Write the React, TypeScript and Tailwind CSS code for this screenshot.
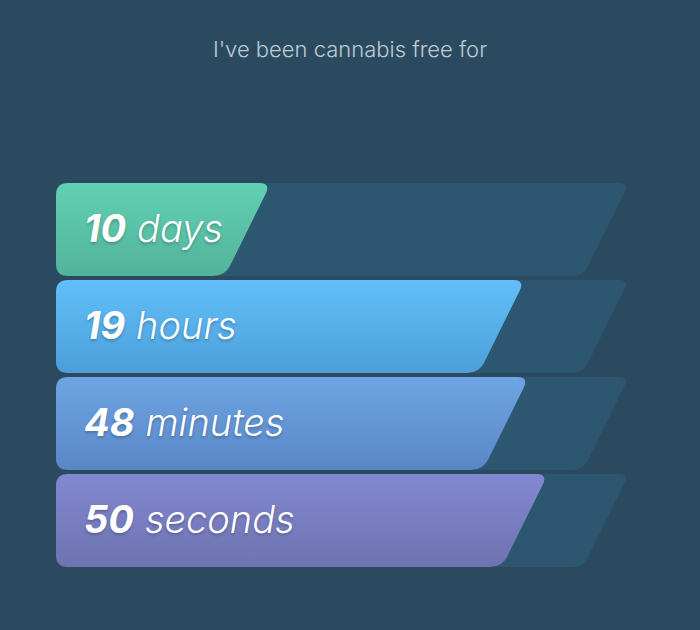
const rows = [
  { num: "10", unit: "days", fill: 215, from: "#62d0b3", to: "#52b39b" },
  { num: "19", unit: "hours", fill: 469, from: "#62bff9", to: "#4c9fd9" },
  { num: "48", unit: "minutes", fill: 473, from: "#6ea4e3", to: "#5987c6" },
  { num: "50", unit: "seconds", fill: 492, from: "#8288d0", to: "#6f73b1" },
];

const W = 573;
const H = 93;
const SLANT = 46;

// rounded polygon: left edge straight, right edge slanted
const shape = (w: number, r: number) => {
  const pts = [
    [0, 0],
    [w, 0],
    [w - SLANT, H],
    [0, H],
  ];
  let d = "";
  for (let i = 0; i < pts.length; i++) {
    const p = pts[i];
    const prev = pts[(i + pts.length - 1) % pts.length];
    const next = pts[(i + 1) % pts.length];
    const v1 = [prev[0] - p[0], prev[1] - p[1]];
    const v2 = [next[0] - p[0], next[1] - p[1]];
    const l1 = Math.hypot(v1[0], v1[1]);
    const l2 = Math.hypot(v2[0], v2[1]);
    const a = [p[0] + (v1[0] / l1) * r, p[1] + (v1[1] / l1) * r];
    const b = [p[0] + (v2[0] / l2) * r, p[1] + (v2[1] / l2) * r];
    d += `${i === 0 ? "M" : "L"}${a[0]},${a[1]} Q${p[0]},${p[1]} ${b[0]},${b[1]} `;
  }
  return d + "Z";
};

const Row = ({ row, i }: { row: (typeof rows)[number]; i: number }) => (
  <div className="relative h-[93px] w-[573px]">
    <svg width={W} height={H} className="absolute inset-0">
      <defs>
        <linearGradient id={`g${i}`} x1="0" y1="0" x2="0" y2="1">
          <stop offset="0%" stopColor={row.from} />
          <stop offset="100%" stopColor={row.to} />
        </linearGradient>
      </defs>
      <path d={shape(W, 10)} fill="#2d5670" />
      <path d={shape(row.fill, 12)} fill={`url(#g${i})`} />
    </svg>
    <div className="relative flex h-full items-center pl-[28px] pb-[2px] text-[38px] italic text-white [text-shadow:0_2px_3px_rgba(0,0,0,0.22)]">
      <span className="font-bold">{row.num}</span>
      <span className="ml-[11px] font-light">{row.unit}</span>
    </div>
  </div>
);

export default function App() {
  return (
    <div className="flex h-[630px] w-[700px] flex-col bg-[#2c4a5f] px-[56px] font-['Inter','Liberation_Sans',sans-serif]">
      <p className="mt-[33px] text-center text-[22px] font-light text-[#bccbd6]">
        I've been cannabis free for
      </p>
      <div className="mt-[117px] flex flex-col gap-[4px]">
        {rows.map((r, i) => (
          <Row key={r.unit} row={r} i={i} />
        ))}
      </div>
    </div>
  );
}
